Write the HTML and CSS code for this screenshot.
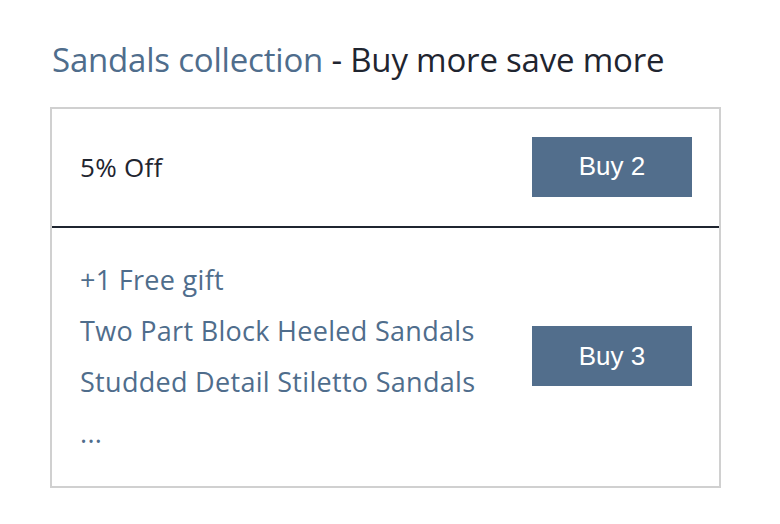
FILE: index.html
```html
<!DOCTYPE html>
<html>
<head>
<meta charset="utf-8">
<link rel="stylesheet" href="styles.css">
</head>
<body>
<div class="wrap">
  <h2 class="title"><span class="accent">Sandals collection</span> - Buy more save more</h2>
  <div class="box">
    <div class="row first">
      <div class="offer">5% Off</div>
      <button class="buy">Buy 2</button>
    </div>
    <div class="row second">
      <ul class="items">
        <li>+1 Free gift</li>
        <li>Two Part Block Heeled Sandals</li>
        <li>Studded Detail Stiletto Sandals</li>
        <li>...</li>
      </ul>
      <button class="buy">Buy 3</button>
    </div>
  </div>
</div>
</body>
</html>
```

FILE: styles.css
```css
html, body {
  margin: 0;
  padding: 0;
  background: #fff;
}
.wrap {
  padding: 37px 0 0 50px;
  width: 671px;
}
.title {
  margin: 0 0 25px 2px;
  font-family: "Open Sans", sans-serif;
  font-weight: 400;
  font-size: 33px;
  line-height: 45px;
  color: #1f2530;
  letter-spacing: -0.2px;
  white-space: nowrap;
}
.accent {
  color: #4f6d8c;
}
.box {
  border: 2px solid #d0d0d0;
}
.row {
  display: flex;
  justify-content: space-between;
  align-items: center;
  padding: 27px 27px 27px 28px;
}
.first {
  border-bottom: 2px solid #1f2530;
  height: 61px;
  padding-top: 27px;
  padding-bottom: 29px;
}
.second {
  padding-top: 26px;
  padding-bottom: 28px;
}
.offer {
  font-family: "Open Sans", sans-serif;
  font-size: 26px;
  color: #1f2530;
  letter-spacing: 0.3px;
}
.buy {
  width: 160px;
  height: 60px;
  border: 0;
  background: #526e8c;
  color: #fff;
  font-family: "Liberation Sans", Arial, sans-serif;
  font-size: 26px;
  padding: 0;
}
.items {
  list-style: none;
  margin: 0;
  padding: 0;
  font-family: "Open Sans", sans-serif;
  font-size: 27px;
  line-height: 51px;
  color: #4f6d8c;
  letter-spacing: 0.3px;
  white-space: nowrap;
}
```
